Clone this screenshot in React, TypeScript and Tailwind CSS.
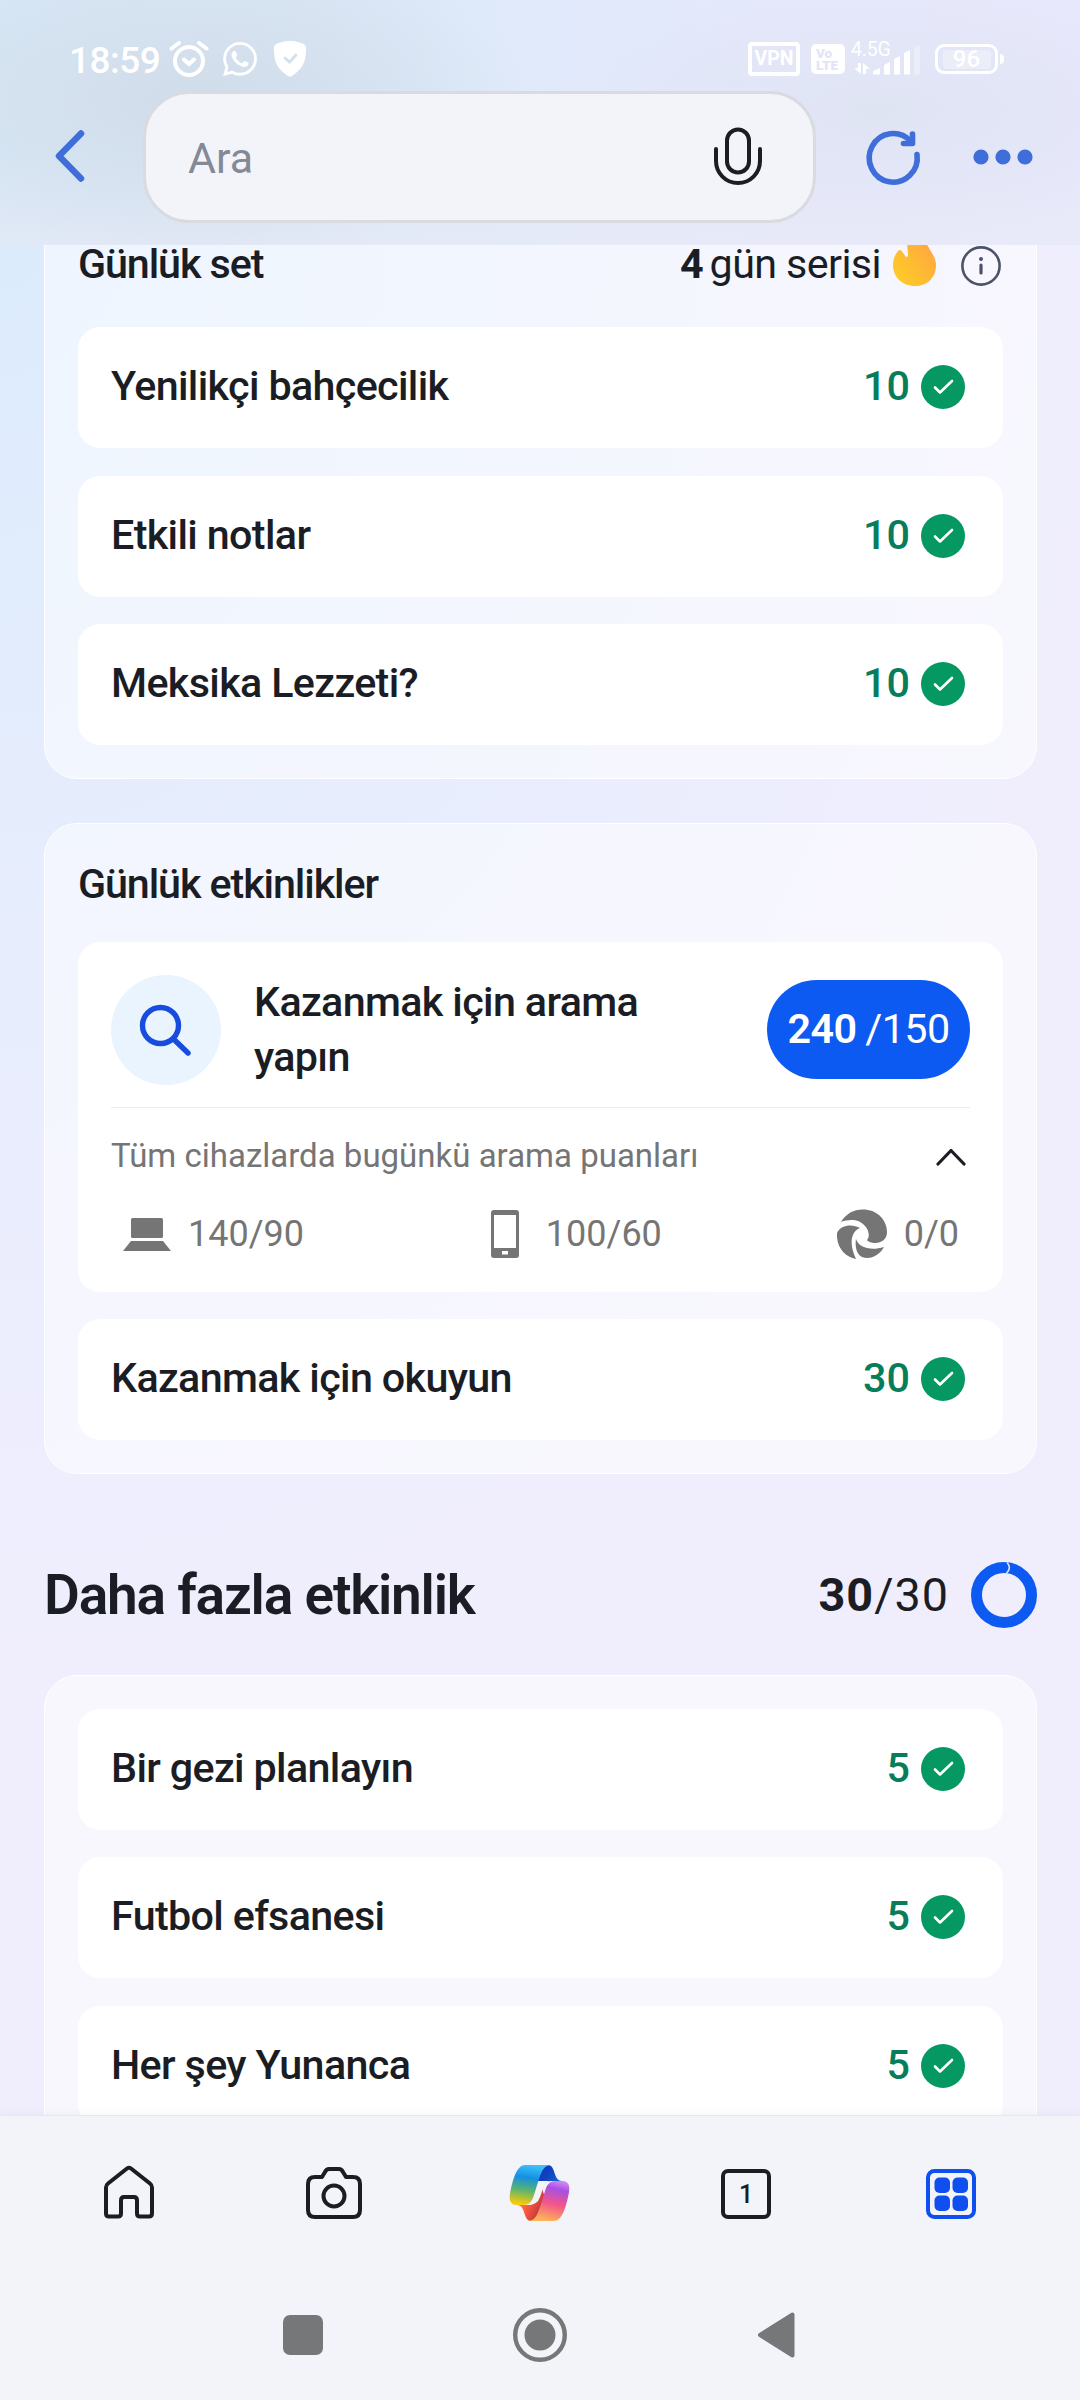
import type { ReactNode } from 'react'

function Check() {
  return (
    <svg viewBox="0 0 44 44" className="w-11 h-11">
      <circle cx="22" cy="22" r="22" fill="#059862" />
      <path d="M14 22.500l5 5L31 16" fill="none" stroke="#fff" strokeWidth="2.600" strokeLinecap="round" strokeLinejoin="round" />
    </svg>
  )
}

function Row({ title, points }: { title: string; points: number }) {
  return (
    <div className="flex items-center justify-between h-[121px] shrink-0 rounded-[22px] bg-white pl-[33px] pr-[38px] pb-[1px]">
      <span className="text-[41.25px] font-medium tracking-[-0.65px] leading-none">{title}</span>
      <span className="flex items-center gap-[11px] text-[41.25px] font-medium text-[#087d5b] leading-none">
        {points}
        <Check />
      </span>
    </div>
  )
}

function Card({ className = '', children }: { className?: string; children: ReactNode }) {
  return (
    <section className={`flex flex-col ml-11 mr-[43px] rounded-[33px] border border-white bg-white/50 px-[33px] pb-[33px] ${className}`}>
      {children}
    </section>
  )
}

function StatusBar() {
  return (
    <div className="flex items-start justify-between h-[91px] pl-[69px] pr-[76px] pt-[41px] text-white">
      <div className="flex items-center h-9">
        <span className="w-[100px] text-[37px] font-medium tracking-[-0.5px] leading-none pt-[2px]">18:59</span>
        <svg viewBox="0 0 40 36" className="w-10 h-9" fill="none" stroke="#fff" strokeWidth="4" strokeLinecap="round">
          <circle cx="20" cy="20" r="14" />
          <path d="M15 18.500l5 4.500 5-4.500M2.500 7.500L10 2M37.500 7.500L30 2" />
        </svg>
        <svg viewBox="0 0 24 24" className="ml-[14px] w-[34px] h-[34px]" fill="#fff">
          <path d="M17.472 14.382c-.297-.149-1.758-.867-2.030-.967-.273-.099-.471-.148-.67.150-.197.297-.767.966-.940 1.164-.173.199-.347.223-.644.075-.297-.150-1.255-.463-2.390-1.475-.883-.788-1.480-1.761-1.653-2.059-.173-.297-.018-.458.130-.606.134-.133.298-.347.446-.520.149-.174.198-.298.298-.497.099-.198.050-.371-.025-.520-.075-.149-.669-1.612-.916-2.207-.242-.579-.487-.5-.669-.510-.173-.008-.371-.010-.570-.010-.198 0-.520.074-.792.372-.272.297-1.040 1.016-1.040 2.479 0 1.462 1.065 2.875 1.213 3.074.149.198 2.096 3.200 5.077 4.487.709.306 1.262.489 1.694.625.712.227 1.360.195 1.871.118.571-.085 1.758-.719 2.006-1.413.248-.694.248-1.289.173-1.413-.074-.124-.272-.198-.570-.347m-5.421 7.403h-.004a9.870 9.870 0 01-5.031-1.378l-.361-.214-3.741.982.998-3.648-.235-.374a9.860 9.860 0 01-1.510-5.260c.001-5.450 4.436-9.884 9.888-9.884 2.640 0 5.122 1.030 6.988 2.898a9.825 9.825 0 012.893 6.994c-.003 5.450-4.437 9.884-9.885 9.884m8.413-18.297A11.815 11.815 0 0012.050 0C5.495 0 .160 5.335.157 11.892c0 2.096.547 4.142 1.588 5.945L.057 24l6.305-1.654a11.882 11.882 0 005.683 1.448h.005c6.554 0 11.890-5.335 11.893-11.893a11.821 11.821 0 00-3.480-8.413z" />
        </svg>
        <svg viewBox="0 0 32 36" className="ml-[17px] w-8 h-9">
          <path d="M16 0C21 0 27 1.500 30 3.200Q32 4.500 32 6.500C32 20 30 27 18 35Q16 36.500 14 35C2 27 0 20 0 6.500Q0 4.500 2 3.200C5 1.500 11 0 16 0z" fill="#fff" />
          <path d="M11 17l4.500 4L22 14" fill="none" stroke="#d5deea" strokeWidth="2.800" strokeLinecap="round" />
        </svg>
      </div>
      <div className="flex items-center h-9">
        <span className="flex items-center justify-center w-[52px] h-[34px] rounded-[4px] border-4 border-white text-[19.500px] font-bold leading-none">VPN</span>
        <span className="ml-[11px] flex flex-col justify-center w-[34px] h-[30px] rounded-[5px] bg-white pl-[5px] text-[13.500px] font-black leading-[12px] text-[#e1e5f7]">
          <span>Vo</span>
          <span>LTE</span>
        </span>
        <span className="ml-[6px] relative w-[70px] h-9">
          <span className="absolute left-0 -top-[3px] text-[19.500px] leading-[23px] tracking-[-0.2px]">4.5G</span>
          <svg viewBox="0 0 70 36" className="w-[70px] h-9" fill="#fff">
            <path d="M7 22h3v11L3 27h4zM12 33V22l7 6h-4v5z" />
            <path d="M22 33.500V30l7-3v6.500zM33 33.500V24l6-3v12.500zM43 33.500V18l6-3v18.500zM53 33.500V12l6-3v24.500z" />
            <path d="M63 33.500V7l6-3v29.500z" opacity=".3" />
          </svg>
        </span>
        <div className="ml-[14px] flex items-center justify-center w-[63px] h-[30px] rounded-[9px] border-[3px] border-white">
          <span className="flex items-center justify-center w-12 h-[19px] rounded-[3px] bg-white/30 text-[24px] font-medium leading-none">96</span>
        </div>
        <span className="ml-[2px] w-[4px] h-[10px] rounded-r-full bg-white" />
      </div>
    </div>
  )
}

function Header() {
  return (
    <header className="relative z-10 h-[245px] shrink-0 bg-[radial-gradient(340px_160px_at_190px_100px,#d1dce9_0%,#d1dce900_100%),radial-gradient(330px_130px_at_880px_110px,#dfe4f3_0%,#dfe4f300_100%),linear-gradient(180deg,#e9eaf600_60%,#e9eaf699_100%),linear-gradient(90deg,#d7e8f6_0%,#dae7f6_28%,#e0eafb_50%,#e6e8fb_75%,#e8e8fc_100%)]">
      <StatusBar />
      <div className="flex items-center h-[132px]">
        <svg viewBox="0 0 30 52" className="ml-[55px] w-[30px] h-[52px] mb-[2px]" fill="none" stroke="#3f6edb" strokeWidth="6.500" strokeLinecap="round" strokeLinejoin="round">
          <path d="M26 3.500L4 26l22 22.500" />
        </svg>
        <div className="ml-[58px] flex items-center justify-between w-[673px] h-[132px] rounded-[46px] border-[3px] border-[#d9dbe1] bg-[#f3f4f9] pl-[42px] pr-[50px]">
          <span className="text-[43px] text-[#838997] leading-none pt-[3px]">Ara</span>
          <svg viewBox="0 0 50 58" className="w-[50px] h-[58px] mb-[2px]" fill="none" stroke="#1b1d24" strokeWidth="4" strokeLinecap="round">
            <rect x="14" y="2.500" width="22" height="43" rx="11" />
            <path d="M3 22v12a22 22 0 0044 0V22" />
          </svg>
        </div>
        <svg viewBox="0 0 54 54" className="ml-[50px] w-[54px] h-[54px] overflow-visible" fill="none" stroke="#3f6edb" strokeWidth="5.600" strokeLinecap="round">
          <path d="M51 24.500A24 24.300 0 1144.500 11" />
          <path d="M46.500 4v9.500h-9" strokeLinejoin="round" />
        </svg>
        <svg viewBox="0 0 60 16" className="ml-[53px] w-[60px] h-4" fill="#3f6edb">
          <circle cx="8" cy="8" r="7.600" />
          <circle cx="30" cy="8" r="7.600" />
          <circle cx="52" cy="8" r="7.600" />
        </svg>
      </div>
    </header>
  )
}

function DailySet() {
  return (
    <Card className="-mt-9 pt-[27px] gap-[27.5px]">
      <div className="flex items-center h-[55.500px] mb-[7px] leading-none text-[41.25px]">
        <h2 className="flex-1 font-medium tracking-[-1.1px]">Günlük set</h2>
        <span className="font-bold mr-[6px]">4</span>
        <span className="tracking-[-0.6px]">gün serisi</span>
        <svg viewBox="0 0 44 56" className="ml-[12px] w-11 h-14 -mt-3">
          <defs>
            <linearGradient id="flame" x1="0" y1="1" x2="1" y2="0">
              <stop offset="0" stopColor="#fcd024" />
              <stop offset=".6" stopColor="#ffb338" />
              <stop offset="1" stopColor="#ff9a48" />
            </linearGradient>
          </defs>
          <path d="M15 0C24 2 31 8 36 17C40 24 43 28 43 34C43 47 34 55 22 55C9 55 0 46 0 34C0 28 2 24 5 20Q7 18 9 20.500L13 26Q15 26.500 15 23C14 15 14 8 15 0z" fill="url(#flame)" />
        </svg>
        <svg viewBox="0 0 40 40" className="ml-6 mr-[2px] w-10 h-10 mt-[2px]" fill="none" stroke="#4c5268" strokeWidth="2.600" strokeLinecap="round">
          <circle cx="20" cy="20" r="18.600" />
          <path d="M20 19v8" strokeWidth="3.200" />
          <circle cx="20" cy="13" r="2" fill="#4c5268" stroke="none" />
        </svg>
      </div>
      <Row title="Yenilikçi bahçecilik" points={10} />
      <Row title="Etkili notlar" points={10} />
      <Row title="Meksika Lezzeti?" points={10} />
    </Card>
  )
}

function SearchActivity() {
  return (
    <div className="flex flex-col h-[349.500px] rounded-[22px] bg-white px-[33px]">
      <div className="flex items-center h-[166px] pt-[10px] border-b border-[#ececee]">
        <div className="flex items-center justify-center w-[110px] h-[110px] rounded-full bg-[#e9f4ff]">
          <svg viewBox="0 0 52 52" className="w-[52px] h-[52px] mr-[2px]" fill="none" stroke="#184cdf" strokeWidth="5.400" strokeLinecap="round">
            <circle cx="21.500" cy="21.500" r="18" />
            <path d="M34.500 35L49 49" />
          </svg>
        </div>
        <p className="ml-[33px] w-[480px] text-[41.25px] font-medium leading-[55px] tracking-[-0.65px]">Kazanmak için arama yapın</p>
        <div className="ml-auto flex items-center justify-center gap-[9px] w-[203px] h-[99px] rounded-full bg-[#0d5af2] text-[41.25px] tracking-[-0.6px] text-white leading-none">
          <b className="font-semibold">240</b>
          <span>/150</span>
        </div>
      </div>
      <div className="flex items-center justify-between h-[96px] text-[33px] text-[#757575]">
        <span>Tüm cihazlarda bugünkü arama puanları</span>
        <svg viewBox="0 0 30 18" className="w-[30px] h-[18px] mr-1 mt-[2px]" fill="none" stroke="#1b1d24" strokeWidth="3.200" strokeLinecap="round" strokeLinejoin="round">
          <path d="M2 16L15 2.500 28 16" />
        </svg>
      </div>
      <div className="flex items-center justify-between h-[60px] pl-3 pr-[11px] text-[36px] text-[#757575] leading-none">
        <span className="flex items-center gap-[17px]">
          <svg viewBox="0 0 48 33" className="w-12 h-[33px]" fill="#757575">
            <rect x="8" y="0" width="32" height="20" rx="1.500" />
            <path d="M8 23h32l8 10H0z" />
          </svg>
          140/90
        </span>
        <span className="flex items-center gap-[27px] ml-3">
          <svg viewBox="0 0 28 48" className="w-7 h-12">
            <path fillRule="evenodd" d="M3 0h22a3 3 0 013 3v42a3 3 0 01-3 3H3a3 3 0 01-3-3V3a3 3 0 013-3zM3 5v33h22V5zM11 41v3.500h6V41z" fill="#757575" />
          </svg>
          100/60
        </span>
        <span className="flex items-center gap-[17px]">
          <svg viewBox="0 0 50 50" className="w-[50px] h-[50px]" fill="#757575">
            <path d="M4 13C10 3 20-1 31 1C43 3 50 13 50 23C50 30 45 34 38 34C35 34 31 33 30 31C33 28 32 21 28 17C22 10 13 10 4 13z" />
            <path d="M0 24C4 15 16 15 23 19C15 22 11 33 19 50C8 48-1 38 0 24z" />
            <path d="M19 30C22 39 34 42 47 38C42 47 33 51 25 48C19 45 18 37 19 30z" />
          </svg>
          0/0
        </span>
      </div>
    </div>
  )
}

function CopilotIcon() {
  return (
    <svg viewBox="0 0 62 56" className="w-[62px] h-14">
      <defs>
        <linearGradient id="c1" x1=".6" y1="0" x2=".45" y2="1">
          <stop offset="0" stopColor="#3fc3fa" />
          <stop offset=".33" stopColor="#148fe2" />
          <stop offset=".65" stopColor="#5bb56d" />
          <stop offset="1" stopColor="#fcc909" />
        </linearGradient>
        <linearGradient id="c2" x1=".65" y1="0" x2=".4" y2="1">
          <stop offset="0" stopColor="#ce82f2" />
          <stop offset=".18" stopColor="#a94fe3" />
          <stop offset=".55" stopColor="#f25589" />
          <stop offset="1" stopColor="#ffb657" />
        </linearGradient>
        <linearGradient id="c3" x1="0" y1="0" x2="1" y2="1">
          <stop offset="0" stopColor="#0a30ae" />
          <stop offset=".4" stopColor="#1043c0" />
          <stop offset="1" stopColor="#1a8cee" />
        </linearGradient>
        <linearGradient id="c4" x1="0" y1="0" x2="1" y2=".5">
          <stop offset="0" stopColor="#ff9a4a" />
          <stop offset=".55" stopColor="#f9583f" />
          <stop offset=".9" stopColor="#c83b3b" />
        </linearGradient>
      </defs>
      <path d="M34 0H39C47 0 44 16 53 16H42Q36 16 34 22L29 36 24 20z" fill="url(#c3)" />
      <path d="M27 56H22C14 56 17 40 8 40H19Q25 40 27 34L32 20 37 36z" fill="url(#c4)" />
      <path d="M42 16Q37 16 34.500 22L31 32Q28.500 40 19 40H14L29 16z" fill="#f3f4f9" />
      <path d="M16 0H41C34 1 32 8 29 17L25 30C23 37 20 40 14 40H8C1 40 0 35 1 29C3 18 7 0 16 0z" fill="url(#c1)" />
      <path d="M45 56H20C27 55 29 48 32 39L36 26C38 19 41 16 47 16H53C60 16 61 21 60 27C58 38 54 56 45 56z" fill="url(#c2)" />
    </svg>
  )
}

function BottomNav() {
  return (
    <nav className="relative z-10 mt-auto h-[285px] shrink-0 border-t border-[#e7e8eb] bg-[#f3f4f9] shadow-[0_-2px_8px_rgba(0,0,0,0.04)]">
      <div className="flex items-center h-[154px] pl-[102px]">
        <svg viewBox="0 0 54 54" className="w-[54px] h-[54px] -mt-[2px]" fill="none" stroke="#1b1d24" strokeWidth="4" strokeLinejoin="round">
          <path d="M4 22.500Q4 20 6 18.500L25 3.500Q27 2 29 3.500L48 18.500Q50 20 50 22.500V48.500Q50 51.500 47 51.500H38Q35 51.500 35 48.500V35.500Q35 32 32 32H22Q19 32 19 35.500V48.500Q19 51.500 16 51.500H7Q4 51.500 4 48.500z" />
        </svg>
        <svg viewBox="0 0 56 52" className="ml-[150px] w-14 h-[52px]" fill="none" stroke="#1b1d24" strokeWidth="4" strokeLinejoin="round">
          <path d="M9 10H16L19 5Q20.500 2 23 2H33Q35.500 2 37 5L40 10H47Q54 10 54 17V43Q54 50 47 50H9Q2 50 2 43V17Q2 10 9 10z" />
          <circle cx="28" cy="29" r="10.500" />
        </svg>
        <span className="ml-[147px]">
          <CopilotIcon />
        </span>
        <div className="ml-[150px] flex items-center justify-center w-[50px] h-[50px] mt-[2px] rounded-[7px] border-4 border-[#1b1d24] text-[25px] font-medium text-[#1b1d24] leading-none">1</div>
        <svg viewBox="0 0 50 50" className="ml-[155px] w-[50px] h-[50px] mt-[2px]" fill="#0f4ff0">
          <rect x="2" y="2" width="46" height="46" rx="6.500" fill="none" stroke="#0f4ff0" strokeWidth="4" />
          <rect x="8.500" y="8.500" width="15.500" height="15.500" rx="5" />
          <rect x="26.500" y="8.500" width="15.500" height="15.500" rx="5" />
          <rect x="8.500" y="26.500" width="15.500" height="15.500" rx="5" />
          <rect x="26.500" y="26.500" width="15.500" height="15.500" rx="5" />
        </svg>
      </div>
      <div className="flex items-center justify-between h-[130px] pl-[283px] pr-[285px]">
        <span className="w-10 h-10 rounded-[7px] bg-[#767779]" />
        <svg viewBox="0 0 54 54" className="w-[54px] h-[54px]" fill="#767779">
          <circle cx="27" cy="27" r="24.800" fill="none" stroke="#767779" strokeWidth="4.400" />
          <circle cx="27" cy="27" r="15.500" />
        </svg>
        <svg viewBox="0 0 38 46" className="w-[38px] h-[46px]">
          <path d="M3 23L35.500 2.500v41z" fill="#767779" stroke="#767779" strokeWidth="4" strokeLinejoin="round" />
        </svg>
      </div>
    </nav>
  )
}

export default function App() {
  return (
    <div className="flex flex-col w-[1080px] h-[2400px] overflow-hidden bg-[#f0eefd] bg-[radial-gradient(1100px_1450px_at_0px_200px,#dbebfc_0%,#e7edfd_50%,#f0eefd00_100%)] font-[Roboto,sans-serif] text-[#1b1d24]">
      <Header />
      <main className="flex flex-col h-[1870px] overflow-hidden">
        <DailySet />
        <Card className="mt-[44px] pt-[33px] gap-[27.5px]">
          <h2 className="h-[57.500px] text-[41.25px] font-medium leading-[55px] tracking-[-1.1px]">Günlük etkinlikler</h2>
          <SearchActivity />
          <Row title="Kazanmak için okuyun" points={30} />
        </Card>
        <div className="flex items-center h-[200.500px] pt-[42px] ml-11 mr-[43px] shrink-0">
          <h1 className="flex-1 text-[55px] font-semibold tracking-[-1.2px]">Daha fazla etkinlik</h1>
          <span className="text-[46.750px] tracking-[1px]">
            <b className="font-bold">30</b>/30
          </span>
          <svg viewBox="0 0 66 66" className="ml-[22px] w-[66px] h-[66px]" fill="none">
            <circle cx="33" cy="33" r="27.500" stroke="#0d5af2" strokeWidth="11" />
            <path d="M36 .5Q41 6 35.500 11" stroke="#dbe7ff" strokeWidth="1.500" />
          </svg>
        </div>
        <Card className="pt-[33px] gap-[27.5px]">
          <Row title="Bir gezi planlayın" points={5} />
          <Row title="Futbol efsanesi" points={5} />
          <Row title="Her şey Yunanca" points={5} />
        </Card>
      </main>
      <BottomNav />
    </div>
  )
}
